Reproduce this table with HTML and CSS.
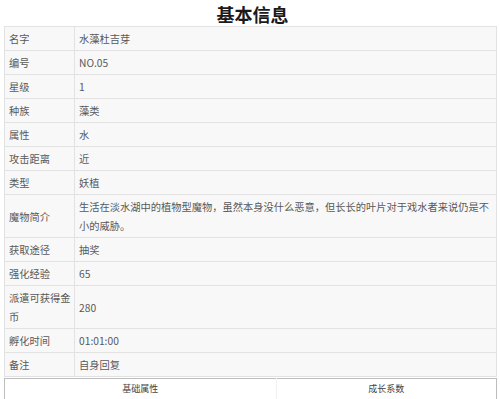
FILE: index.html
```html
<!DOCTYPE html>
<html lang="zh">
<head>
<meta charset="utf-8">
<link rel="stylesheet" href="styles.css">
</head>
<body>
<div class="page">
  <h1 class="title">基本信息</h1>
  <table class="info">
    <tr><td class="k">名字</td><td>水藻杜吉芽</td></tr>
    <tr><td class="k">编号</td><td>NO.05</td></tr>
    <tr><td class="k">星级</td><td>1</td></tr>
    <tr><td class="k">种族</td><td>藻类</td></tr>
    <tr><td class="k">属性</td><td>水</td></tr>
    <tr><td class="k">攻击距离</td><td>近</td></tr>
    <tr><td class="k">类型</td><td>妖植</td></tr>
    <tr><td class="k">魔物简介</td><td>生活在淡水湖中的植物型魔物，虽然本身没什么恶意，但长长的叶片对于戏水者来说仍是不小的威胁。</td></tr>
    <tr><td class="k">获取途径</td><td>抽奖</td></tr>
    <tr><td class="k">强化经验</td><td>65</td></tr>
    <tr><td class="k">派遣可获得金币</td><td>280</td></tr>
    <tr><td class="k">孵化时间</td><td>01:01:00</td></tr>
    <tr><td class="k">备注</td><td>自身回复</td></tr>
  </table>
  <table class="growth">
    <tr><th class="g1">基础属性</th><th>成长系数</th></tr>
  </table>
</div>
</body>
</html>
```

FILE: styles.css
```css
html, body {
  margin: 0;
  padding: 0;
  background: #ffffff;
}
.page {
  padding: 0 3px 0 4px;
  font-family: "Noto Sans CJK SC", "Noto Sans", sans-serif;
  color: #595959;
}
.title {
  margin: 0;
  height: 26px;
  line-height: 28px;
  font-size: 18px;
  font-weight: bold;
  color: #1a1a1a;
  text-align: center;
  padding-left: 4px;
}
.info {
  width: 100%;
  border-collapse: collapse;
  background: #f8f8f8;
  font-size: 10.25px;
  table-layout: fixed;
}
.info td {
  border: 1px solid #e2e2e2;
  padding: 2px 4px 2px 4px;
  line-height: 19px;
  vertical-align: middle;
  word-break: break-all;
}
.info td.k {
  width: 63px;
  padding-right: 2px;
}
.growth {
  width: 100%;
  border-collapse: collapse;
  background: #ffffff;
  margin-top: 1px;
  font-size: 9px;
  table-layout: fixed;
}
.growth th {
  border: 1px solid #bdbdbd;
  border-bottom: none;
  font-weight: normal;
  color: #444444;
  line-height: 17px;
  padding: 1px 0 2px;
  text-align: center;
}
.growth th.g1 {
  width: 55%;
  border-right-color: #f0f0f0;
}
```
